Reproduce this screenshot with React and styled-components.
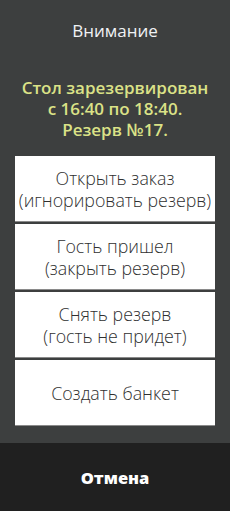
import React from 'react';
import styled, { createGlobalStyle } from 'styled-components';

const GlobalStyle = createGlobalStyle`
    html, body {
        margin: 0;
        padding: 0;
        background: #3d3f3f;
    }
    * {
        box-sizing: border-box;
    }
`;

const Dialog = styled.div`
    width: 230px;
    height: 511px;
    display: flex;
    flex-direction: column;
    background: #3d3f3f;
    font-family: "Open Sans", Lato, sans-serif;
`;

const Body = styled.div`
    flex: 1;
    display: flex;
    flex-direction: column;
    align-items: center;
    padding: 20px 15px 0;
`;

const Title = styled.div`
    color: #f0f2f5;
    font-size: 17px;
    line-height: 22px;
`;

const Notice = styled.div`
    margin-top: 35px;
    color: #dbe287;
    font-size: 17px;
    font-weight: 600;
    line-height: 21px;
    text-align: center;
`;

const Actions = styled.div`
    margin-top: 16px;
    width: 100%;
    display: flex;
    flex-direction: column;
    gap: 2px;
`;

const Action = styled.button`
    height: 66px;
    width: 100%;
    display: flex;
    flex-direction: column;
    align-items: center;
    justify-content: center;
    border: none;
    border-bottom: 1px solid #8a8a8a;
    background: #ffffff;
    color: #2f3030;
    font-family: inherit;
    font-size: 17.8px;
    font-weight: 300;
    line-height: 22px;
    white-space: nowrap;
    padding: 0;
    cursor: pointer;
`;

const Line = styled.span`
    display: block;
`;

const Footer = styled.button`
    height: 68px;
    border: none;
    background: #202020;
    color: #ffffff;
    font-family: inherit;
    font-size: 16.5px;
    font-weight: 800;
    padding: 0;
    cursor: pointer;
`;

const actions = [
    ['Открыть заказ', '(игнорировать резерв)'],
    ['Гость пришел', '(закрыть резерв)'],
    ['Снять резерв', '(гость не придет)'],
    ['Создать банкет'],
];

const App = () => {
    return (
        <>
            <GlobalStyle />
            <Dialog>
                <Body>
                    <Title>Внимание</Title>
                    <Notice>
                        Стол зарезервирован<br />
                        с 16:40 по 18:40.<br />
                        Резерв №17.
                    </Notice>
                    <Actions>
                        {actions.map((lines, i) => (
                            <Action key={i}>
                                {lines.map((l, j) => <Line key={j}>{l}</Line>)}
                            </Action>
                        ))}
                    </Actions>
                </Body>
                <Footer>Отмена</Footer>
            </Dialog>
        </>
    );
};

export default App;
